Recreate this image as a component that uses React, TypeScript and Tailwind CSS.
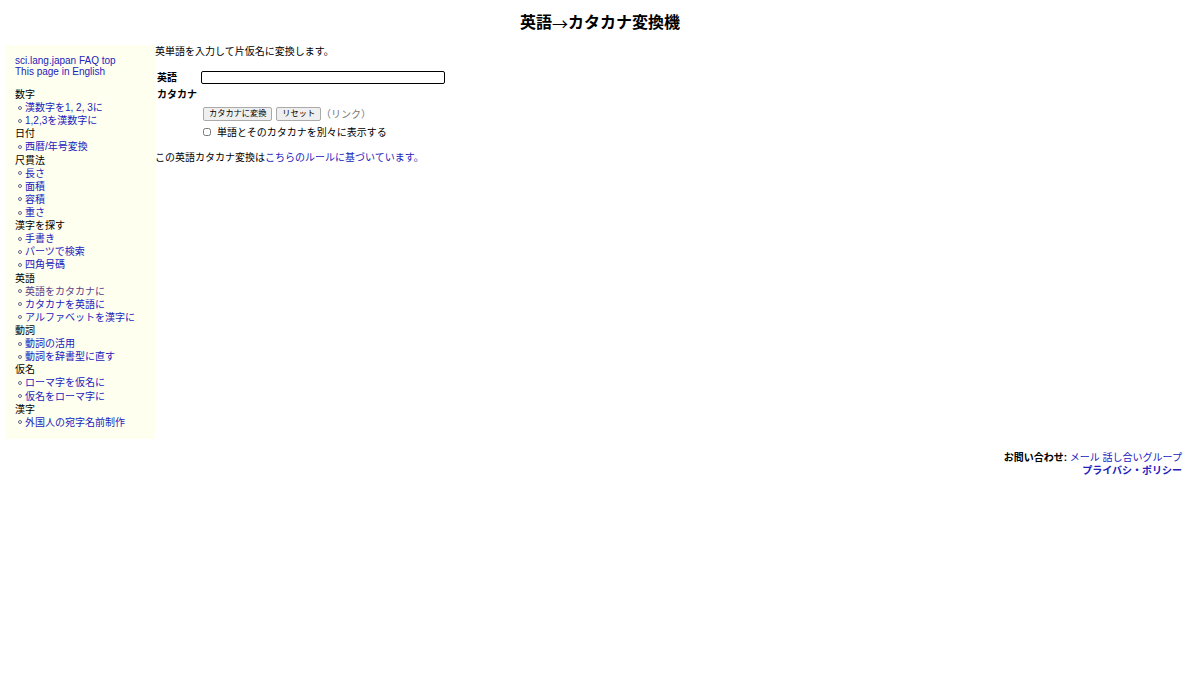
import React from 'react';

const font = { fontFamily: '"Liberation Sans", "Noto Sans CJK JP", sans-serif' };

const menu: { title: string; items: { label: string; visited?: boolean }[] }[] = [
  { title: '数字', items: [{ label: '漢数字を1, 2, 3に' }, { label: '1,2,3を漢数字に' }] },
  { title: '日付', items: [{ label: '西暦/年号変換' }] },
  { title: '尺貫法', items: [{ label: '長さ' }, { label: '面積' }, { label: '容積' }, { label: '重さ' }] },
  { title: '漢字を探す', items: [{ label: '手書き' }, { label: 'パーツで検索' }, { label: '四角号碼' }] },
  {
    title: '英語',
    items: [
      { label: '英語をカタカナに', visited: true },
      { label: 'カタカナを英語に' },
      { label: 'アルファベットを漢字に' },
    ],
  },
  { title: '動詞', items: [{ label: '動詞の活用' }, { label: '動詞を辞書型に直す' }] },
  { title: '仮名', items: [{ label: 'ローマ字を仮名に' }, { label: '仮名をローマ字に' }] },
  { title: '漢字', items: [{ label: '外国人の宛字名前制作' }] },
];

function Sidebar() {
  return (
    <div className="w-[150px] ml-[5px] shrink-0 bg-[#fffff0] pt-[10px] pb-[10px] pl-[10px] text-[10px] text-black">
      <div className="leading-[11px] text-[#2222bb]">
        <a href="#" className="block">sci.lang.japan FAQ top</a>
        <a href="#" className="block">This page in English</a>
      </div>
      <div className="mt-[11px] leading-[13.12px]">
        {menu.map((group) => (
          <div key={group.title}>
            <div className="h-[13.12px] whitespace-nowrap">{group.title}</div>
            {group.items.map((item) => (
              <div key={item.label} className="h-[13.12px] flex items-center whitespace-nowrap">
                <span className="inline-block w-[4px] h-[4px] rounded-full border border-[#6a6a8a] ml-[3px] mr-[3px]" />
                <a href="#" className={item.visited ? 'text-[#5b3f86]' : 'text-[#2222bb]'}>
                  {item.label}
                </a>
              </div>
            ))}
          </div>
        ))}
      </div>
    </div>
  );
}

function Converter() {
  return (
    <div className="flex-1 text-[10px] text-black">
      <div className="h-[13px] leading-[13px]">英単語を入力して片仮名に変換します。</div>
      <div className="mt-[11px]">
        <div className="flex items-center h-[17px]">
          <div className="w-[46px] pl-[2px] font-bold">英語</div>
          <input
            type="text"
            className="w-[244px] h-[13px] border-[1.5px] border-black rounded-[2px] bg-white outline-none"
          />
        </div>
        <div className="flex items-center h-[17px]">
          <div className="w-[46px] pl-[2px] font-bold whitespace-nowrap">カタカナ</div>
        </div>
        <div className="flex items-center h-[22px] pl-[48px]">
          <button className="h-[14px] px-[5px] text-[8.2px] leading-none bg-[#efefef] border border-[#aaaaaa] rounded-[2px]">
            カタカナに変換
          </button>
          <button className="h-[14px] ml-[4px] px-[5px] text-[8.2px] leading-none bg-[#efefef] border border-[#aaaaaa] rounded-[2px]">
            リセット
          </button>
          <span className="text-[#777777]">（リンク）</span>
        </div>
        <div className="flex items-center h-[14px] pl-[48px]">
          <input type="checkbox" className="w-[8px] h-[8px] m-0" />
          <label className="ml-[6px]">単語とそのカタカナを別々に表示する</label>
        </div>
      </div>
      <div className="mt-[12px] h-[13px] leading-[13px]">
        この英語カタカナ変換は
        <a href="#" className="text-[#2222bb]">
          こちらのルールに基づいています。
        </a>
      </div>
    </div>
  );
}

export default function App() {
  return (
    <div className="min-h-[675px] bg-white" style={font}>
      <h1 className="h-[45px] flex items-center justify-center text-[16px] font-bold text-black">
        英語<span className="font-normal font-['Noto_Sans_CJK_JP']">→</span>カタカナ変換機
      </h1>
      <div className="flex items-start">
        <Sidebar />
        <Converter />
      </div>
      <div className="mt-[12px] pr-[18px] text-right text-[10px] leading-[13px]">
        <div>
          <span className="font-bold">お問い合わせ:</span>{' '}
          <a href="#" className="text-[#2222bb]">メール</a>{' '}
          <a href="#" className="text-[#2222bb]">話し合いグループ</a>
        </div>
        <div>
          <a href="#" className="font-bold text-[#2222bb]">プライバシ・ポリシー</a>
        </div>
      </div>
    </div>
  );
}
